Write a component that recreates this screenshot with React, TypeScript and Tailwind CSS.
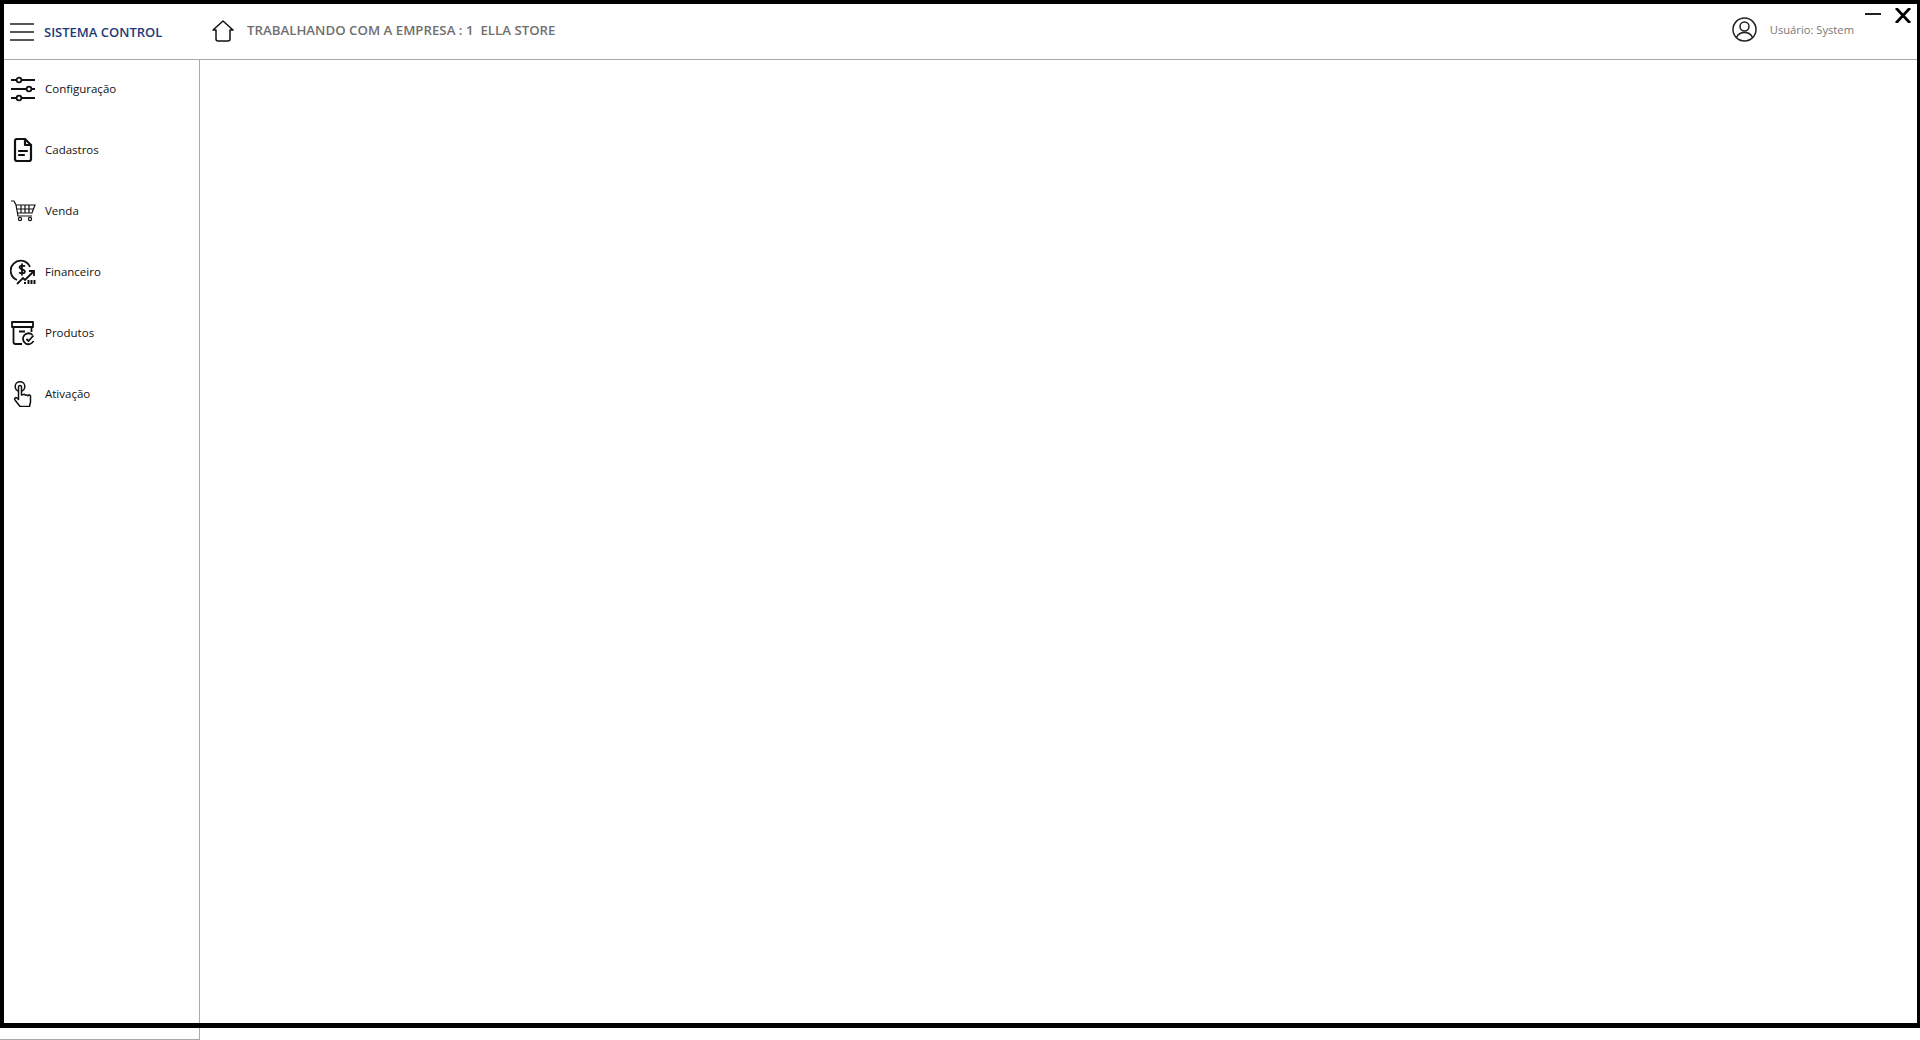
import React from "react"

const MenuItems = [
  {
    label: "Configuração",
    icon: (
      <svg width="26" height="26" viewBox="0 0 26 26" fill="none" stroke="#111" strokeWidth="1.8">
        <path d="M1 4h5M12 4h13M1 13h15M22 13h3M1 22h5M12 22h13" />
        <circle cx="9" cy="4" r="2.400" />
        <circle cx="19" cy="13" r="2.400" />
        <circle cx="9" cy="22" r="2.400" />
      </svg>
    ),
  },
  {
    label: "Cadastros",
    icon: (
      <svg width="26" height="26" viewBox="0 0 26 26" fill="none" stroke="#111" strokeWidth="2.200" strokeLinejoin="round" strokeLinecap="round">
        <path d="M7 2h8l6 6v14a2 2 0 0 1-2 2H7a2 2 0 0 1-2-2V4a2 2 0 0 1 2-2z" />
        <path d="M15 2v6h6M9 14h8M9 18h5" />
      </svg>
    ),
  },
  {
    label: "Venda",
    icon: (
      <svg width="26" height="26" viewBox="0 0 26 26" fill="none" stroke="#111" strokeWidth="1.200">
        <path d="M1 3h3l2 4 2 11h14M6 7h19l-3 8H8M11 7v8M15 7v8M19 7v8M7 11h17" />
        <circle cx="10" cy="21" r="1.600" />
        <circle cx="20" cy="21" r="1.600" />
      </svg>
    ),
  },
  {
    label: "Financeiro",
    icon: (
      <svg width="26" height="26" viewBox="0 0 26 26" fill="none" stroke="#111" strokeWidth="1.800">
        <path d="M20 8a10 10 0 1 0-13 13" />
        <path d="M15 7.500c-1-1.200-4.800-1.500-5.400.6-.7 2.700 5.600 2 5.300 4.700-.3 2.100-4.300 2-5.800.6M12 4.500v12" strokeWidth="1.800" />
        <path d="M7 25l6-6 2 2 8-8M19 12h5v5" />
        <path d="M15 25v-2M18.500 25v-4M21.500 25v-4M24.500 25v-4" strokeWidth="2" />
      </svg>
    ),
  },
  {
    label: "Produtos",
    icon: (
      <svg width="26" height="26" viewBox="0 0 26 26" fill="none" stroke="#111" strokeWidth="1.800" strokeLinejoin="round">
        <path d="M2 2h21v5H2zM3.500 7v15a2 2 0 0 0 2 2H12M21.500 7v5M9 11.500h6" />
        <path d="M23.500 21a5.500 5.500 0 1 1-1-6" />
        <path d="M16.500 19l2 2 5-5.500" />
      </svg>
    ),
  },
  {
    label: "Ativação",
    icon: (
      <svg width="26" height="26" viewBox="0 0 26 26" fill="none" stroke="#111" strokeWidth="1.500" strokeLinejoin="round">
        <circle cx="10" cy="5.500" r="4.800" />
        <path d="M8.500 6a1.500 1.500 0 0 1 3 0v8l2-.5a1.500 1.500 0 0 1 2 .8 1.500 1.500 0 0 1 2.200.5 1.500 1.500 0 0 1 2.800 1V21l-1 4.500H10l-5-6.500c-1-1.500.5-3 2-2l1.500 1.500z" fill="#fff" />
      </svg>
    ),
  },
]

export default function App() {
  return (
    <div className="w-[1920px] h-[1040px] bg-white overflow-hidden font-['Open_Sans','Noto_Sans',sans-serif]">
      <div className="h-[1028px] border-t-4 border-l-4 border-r-[3px] border-b-[5px] border-black flex flex-col">
        <header className="h-[56px] shrink-0 border-b border-[#a9a9a9] flex items-center">
          <div className="w-[195px] shrink-0 flex items-center">
            <svg className="ml-[6px]" width="24" height="18" viewBox="0 0 24 18" stroke="#222" strokeWidth="1.600">
              <path d="M0 1h24M0 9h24M0 17h24" />
            </svg>
            <span className="ml-[10px] mt-[2px] text-[13px] font-semibold text-[#1f3a78]">SISTEMA CONTROL</span>
          </div>
          <svg className="ml-[13px] -mt-[2px]" width="22" height="22" viewBox="0 0 22 22" fill="none" stroke="#111" strokeWidth="1.500" strokeLinejoin="round">
            <path d="M1 10L11 1l10 9h-3v9a2 2 0 0 1-2 2H6a2 2 0 0 1-2-2v-9z" />
          </svg>
          <span className="ml-[13px] -mt-[2px] text-[13.250px] font-semibold text-[#6f6f6f]">TRABALHANDO COM A EMPRESA : 1&nbsp;&nbsp;ELLA STORE</span>
          <div className="ml-auto flex items-center relative h-full">
            <svg className="-mt-[4px]" width="25" height="25" viewBox="0 0 25 25" fill="none" stroke="#222" strokeWidth="1.500">
              <circle cx="12.500" cy="12.500" r="11.500" />
              <circle cx="12.500" cy="9.500" r="4.500" />
              <path d="M4.500 20.500c1.500-3.500 4.500-5 8-5s6.500 1.500 8 5" />
            </svg>
            <span className="ml-[13px] mr-[63px] -mt-[2px] text-[11.200px] text-[#777]">Usuário: System</span>
            <div className="absolute right-[36px] top-[9px] w-[16px] h-[2px] bg-[#222]" />
            <svg className="absolute right-[6px] top-[4px]" width="16" height="15" viewBox="0 0 16 15" stroke="#000" strokeWidth="2.800">
              <path d="M1 0l14 15M15 0L1 15" />
            </svg>
          </div>
        </header>
        <div className="flex flex-1 min-h-0">
          <aside className="w-[196px] shrink-0 border-r border-[#a9a9a9] flex flex-col">
            {MenuItems.map((item) => (
              <div key={item.label} className="h-[61px] pb-[3px] shrink-0 flex items-center pl-[6px]">
                {item.icon}
                <span className="ml-[9px] text-[11.500px] text-[#111]">{item.label}</span>
              </div>
            ))}
          </aside>
          <main className="flex-1" />
        </div>
      </div>
      <div className="w-[200px] h-[12px] border-r border-b border-[#a9a9a9]" />
    </div>
  )
}
